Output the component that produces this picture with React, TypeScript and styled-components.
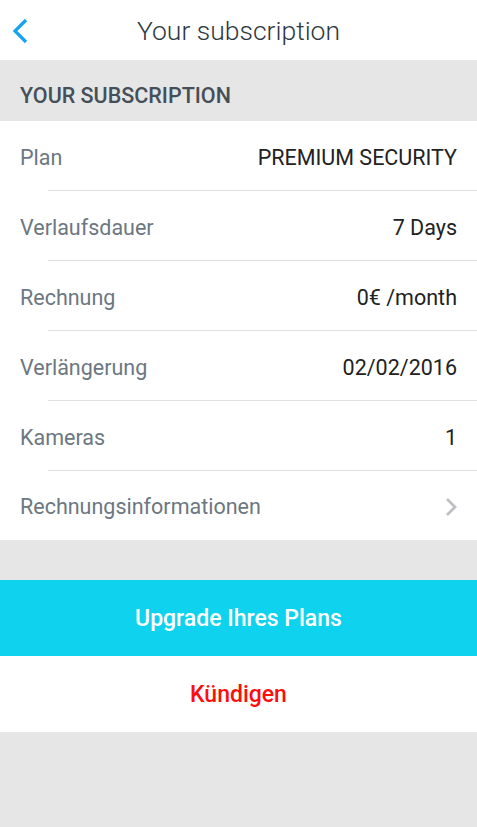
import styled, { createGlobalStyle } from 'styled-components';

const GlobalStyle = createGlobalStyle`
    html, body {
        margin: 0;
        padding: 0;
        background: #e6e6e6;
        font-family: Roboto, 'Noto Sans', sans-serif;
    }
`

const Page = styled.div`
    width: 477px;
    min-height: 827px;
    background: #e6e6e6;
`

const Header = styled.header`
    position: relative;
    height: 60px;
    background: #ffffff;
    display: flex;
    align-items: center;
    justify-content: center;

    h1 {
        margin: 0;
        font-size: 26.5px;
        font-weight: 300;
        color: #2e3841;
    }
`

const BackButton = styled.button`
    position: absolute;
    left: 6px;
    top: 15px;
    width: 28px;
    height: 32px;
    padding: 0;
    border: none;
    background: none;
    display: flex;
    align-items: center;
    justify-content: center;
`

const SectionTitle = styled.div`
    height: 61px;
    box-sizing: border-box;
    padding: 10px 20px 0;
    display: flex;
    align-items: center;
    font-size: 21.5px;
    font-weight: 500;
    color: #454f58;
`

const List = styled.div`
    background: #ffffff;
`

const Row = styled.div<{ $last?: boolean }>`
    height: ${p => (p.$last ? '69px' : '70px')};
    box-sizing: border-box;
    padding-top: 2px;
    margin-left: 20px;
    padding-right: 20px;
    display: flex;
    align-items: center;
    justify-content: space-between;
    position: relative;
    font-size: 21.5px;

    &::after {
        content: '';
        display: ${p => (p.$last ? 'none' : 'block')};
        position: absolute;
        left: 28px;
        right: 0;
        bottom: 0;
        height: 1px;
        background: #e0e0e0;
    }
`

const Label = styled.span`
    color: #6c7781;
`

const Value = styled.span`
    color: #222222;
`

const Spacer = styled.div`
    height: 40px;
`

const ActionButton = styled.button<{ $primary?: boolean }>`
    display: block;
    width: 100%;
    height: 76px;
    border: none;
    margin: 0;
    font-family: Roboto, 'Noto Sans', sans-serif;
    font-size: 23px;
    font-weight: 500;
    color: ${p => (p.$primary ? '#ffffff' : '#ff0d0d')};
    background: ${p => (p.$primary ? '#0fd2ee' : '#ffffff')};
`

const rows = [
    { label: 'Plan', value: 'PREMIUM SECURITY' },
    { label: 'Verlaufsdauer', value: '7 Days' },
    { label: 'Rechnung', value: '0€ /month' },
    { label: 'Verlängerung', value: '02/02/2016' },
    { label: 'Kameras', value: '1' },
]

function App() {
    return (
        <Page>
            <GlobalStyle />
            <Header>
                <BackButton aria-label="Zurück">
                    <svg width="18" height="28" viewBox="0 0 18 28">
                        <path d="M15 3 L4 14 L15 25" fill="none" stroke="#16a4f0" strokeWidth="3.2" />
                    </svg>
                </BackButton>
                <h1>Your subscription</h1>
            </Header>
            <SectionTitle>YOUR SUBSCRIPTION</SectionTitle>
            <List>
                {rows.map(r => (
                    <Row key={r.label}>
                        <Label>{r.label}</Label>
                        <Value>{r.value}</Value>
                    </Row>
                ))}
                <Row $last>
                    <Label>Rechnungsinformationen</Label>
                    <svg width="12" height="20" viewBox="0 0 12 20">
                        <path d="M2 2 L10 10 L2 18" fill="none" stroke="#c0c0c4" strokeWidth="2.8" />
                    </svg>
                </Row>
            </List>
            <Spacer />
            <ActionButton $primary>Upgrade Ihres Plans</ActionButton>
            <ActionButton>Kündigen</ActionButton>
        </Page>
    )
}

export default App
